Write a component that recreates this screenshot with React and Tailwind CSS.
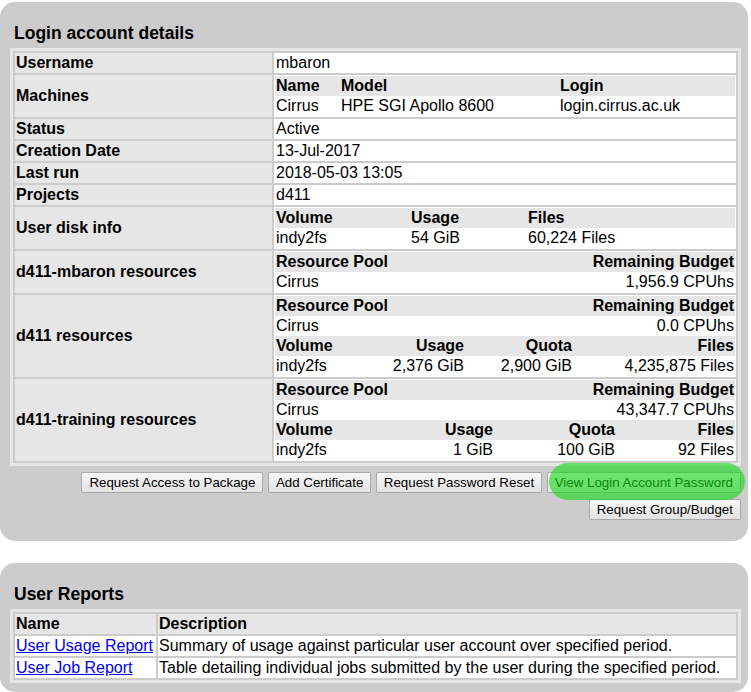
import React from "react";

const Cell = ({ children, className = "" }) => (
  <div className={"p-[1px] leading-[18px] whitespace-nowrap " + className}>{children}</div>
);

function Grid({ cols, rows }) {
  return (
    <div>
      {rows.map((r, i) => (
        <div
          key={i}
          className={"grid " + cols + " " + (r.head ? "bg-[#e6e6e6] font-bold" : "bg-white")}
        >
          {r.cells.map((c, j) => (
            <Cell key={j} className={r.align ? r.align[j] : ""}>
              {c}
            </Cell>
          ))}
        </div>
      ))}
    </div>
  );
}

const Label = ({ children }) => (
  <td className="bg-[#e6e6e6] font-bold p-[1px] leading-[18px] align-middle whitespace-nowrap">
    {children}
  </td>
);

const Value = ({ children }) => (
  <td className="bg-white p-[1px] leading-[18px] align-middle">{children}</td>
);

const Text = ({ children }) => (
  <td className="bg-white p-[1px] leading-[18px] align-middle">
    <div className="pl-[1px]">{children}</div>
  </td>
);

const poolCols = "grid-cols-[1fr_1fr]";
const poolAlign = ["", "text-right"];
const r4 = ["", "text-right", "text-right", "text-right"];

const Btn = ({ children }) => (
  <button className="h-[21px] px-[7px] border border-[#a9a9a9] rounded-[2px] bg-gradient-to-b from-[#f7f7f7] to-[#e3e3e3] text-[13.33px] leading-[15px] text-black whitespace-nowrap font-['Liberation_Sans',Arial,sans-serif]">
    {children}
  </button>
);

export default function App() {
  return (
    <div className="font-['Liberation_Sans',Arial,sans-serif] text-[16px] text-black bg-white min-h-[692px] pt-[2px]">
      {/* Panel 1 */}
      <div className="w-[748px] bg-[#cccccc] rounded-[15px] pt-[21px] pb-[21px] pl-[10px] pr-[7px]">
        <h3 className="ml-[4px] font-bold text-[17.5px] leading-[20px] mb-[5px]">Login account details</h3>
        <table className="table-fixed w-[731px] border-separate border-spacing-[2px] border-[3px] border-solid border-[#e6e6e6]">
          <colgroup>
            <col className="w-[257px]" />
            <col className="w-[462px]" />
          </colgroup>
          <tbody>
            <tr>
              <Label>Username</Label>
              <Text>mbaron</Text>
            </tr>
            <tr>
              <Label>Machines</Label>
              <Value>
                <Grid
                  cols="grid-cols-[65px_219px_176px]"
                  rows={[
                    { head: true, cells: ["Name", "Model", "Login"] },
                    { cells: ["Cirrus", "HPE SGI Apollo 8600", "login.cirrus.ac.uk"] },
                  ]}
                />
              </Value>
            </tr>
            <tr>
              <Label>Status</Label>
              <Text>Active</Text>
            </tr>
            <tr>
              <Label>Creation Date</Label>
              <Text>13-Jul-2017</Text>
            </tr>
            <tr>
              <Label>Last run</Label>
              <Text>2018-05-03 13:05</Text>
            </tr>
            <tr>
              <Label>Projects</Label>
              <Text>d411</Text>
            </tr>
            <tr>
              <Label>User disk info</Label>
              <Value>
                <Grid
                  cols="grid-cols-[135px_117px_208px]"
                  rows={[
                    { head: true, cells: ["Volume", "Usage", "Files"] },
                    { cells: ["indy2fs", "54 GiB", "60,224 Files"] },
                  ]}
                />
              </Value>
            </tr>
            <tr>
              <Label>d411-mbaron resources</Label>
              <Value>
                <Grid
                  cols={poolCols}
                  rows={[
                    { head: true, cells: ["Resource Pool", "Remaining Budget"], align: poolAlign },
                    { cells: ["Cirrus", "1,956.9 CPUhs"], align: poolAlign },
                  ]}
                />
              </Value>
            </tr>
            <tr>
              <Label>d411 resources</Label>
              <Value>
                <Grid
                  cols={poolCols}
                  rows={[
                    { head: true, cells: ["Resource Pool", "Remaining Budget"], align: poolAlign },
                    { cells: ["Cirrus", "0.0 CPUhs"], align: poolAlign },
                  ]}
                />
                <Grid
                  cols="grid-cols-[106px_84px_108px_162px]"
                  rows={[
                    { head: true, cells: ["Volume", "Usage", "Quota", "Files"], align: r4 },
                    { cells: ["indy2fs", "2,376 GiB", "2,900 GiB", "4,235,875 Files"], align: r4 },
                  ]}
                />
              </Value>
            </tr>
            <tr>
              <Label>d411-training resources</Label>
              <Value>
                <Grid
                  cols={poolCols}
                  rows={[
                    { head: true, cells: ["Resource Pool", "Remaining Budget"], align: poolAlign },
                    { cells: ["Cirrus", "43,347.7 CPUhs"], align: poolAlign },
                  ]}
                />
                <Grid
                  cols="grid-cols-[146px_73px_122px_119px]"
                  rows={[
                    { head: true, cells: ["Volume", "Usage", "Quota", "Files"], align: r4 },
                    { cells: ["indy2fs", "1 GiB", "100 GiB", "92 Files"], align: r4 },
                  ]}
                />
              </Value>
            </tr>
          </tbody>
        </table>
        <div className="mt-[6px] flex flex-wrap justify-end gap-x-[4.5px] gap-y-[6px]">
          <Btn>Request Access to Package</Btn>
          <Btn>Add Certificate</Btn>
          <Btn>Request Password Reset</Btn>
          <span className="relative inline-flex">
            <Btn>View Login Account Password</Btn>
            <span className="pointer-events-none absolute left-[2px] top-[-9px] w-[196px] h-[37px] rounded-full bg-[#12d812]/60"></span>
          </span>
          <Btn>Request Group/Budget</Btn>
        </div>
      </div>

      {/* Panel 2 */}
      <div className="mt-[22px] w-[748px] bg-[#cccccc] rounded-[15px] pt-[21px] pb-[9px] pl-[10px] pr-[7px]">
        <h3 className="ml-[4px] font-bold text-[17.5px] leading-[20px] mb-[5px]">User Reports</h3>
        <table className="table-fixed w-[731px] border-separate border-spacing-[2px] border-[3px] border-solid border-[#e6e6e6]">
          <colgroup>
            <col className="w-[141px]" />
            <col className="w-[578px]" />
          </colgroup>
          <tbody>
            <tr>
              <td className="bg-[#e6e6e6] font-bold p-[1px] leading-[18px]">Name</td>
              <td className="bg-[#e6e6e6] font-bold p-[1px] leading-[18px]">Description</td>
            </tr>
            <tr>
              <td className="bg-white p-[1px] leading-[18px] whitespace-nowrap">
                <a href="#" className="text-[#0000ee] underline">User Usage Report</a>
              </td>
              <td className="bg-white p-[1px] leading-[18px] whitespace-nowrap">
                Summary of usage against particular user account over specified period.
              </td>
            </tr>
            <tr>
              <td className="bg-white p-[1px] leading-[18px] whitespace-nowrap">
                <a href="#" className="text-[#0000ee] underline">User Job Report</a>
              </td>
              <td className="bg-white p-[1px] leading-[18px] whitespace-nowrap">
                Table detailing individual jobs submitted by the user during the specified period.
              </td>
            </tr>
          </tbody>
        </table>
      </div>
    </div>
  );
}
